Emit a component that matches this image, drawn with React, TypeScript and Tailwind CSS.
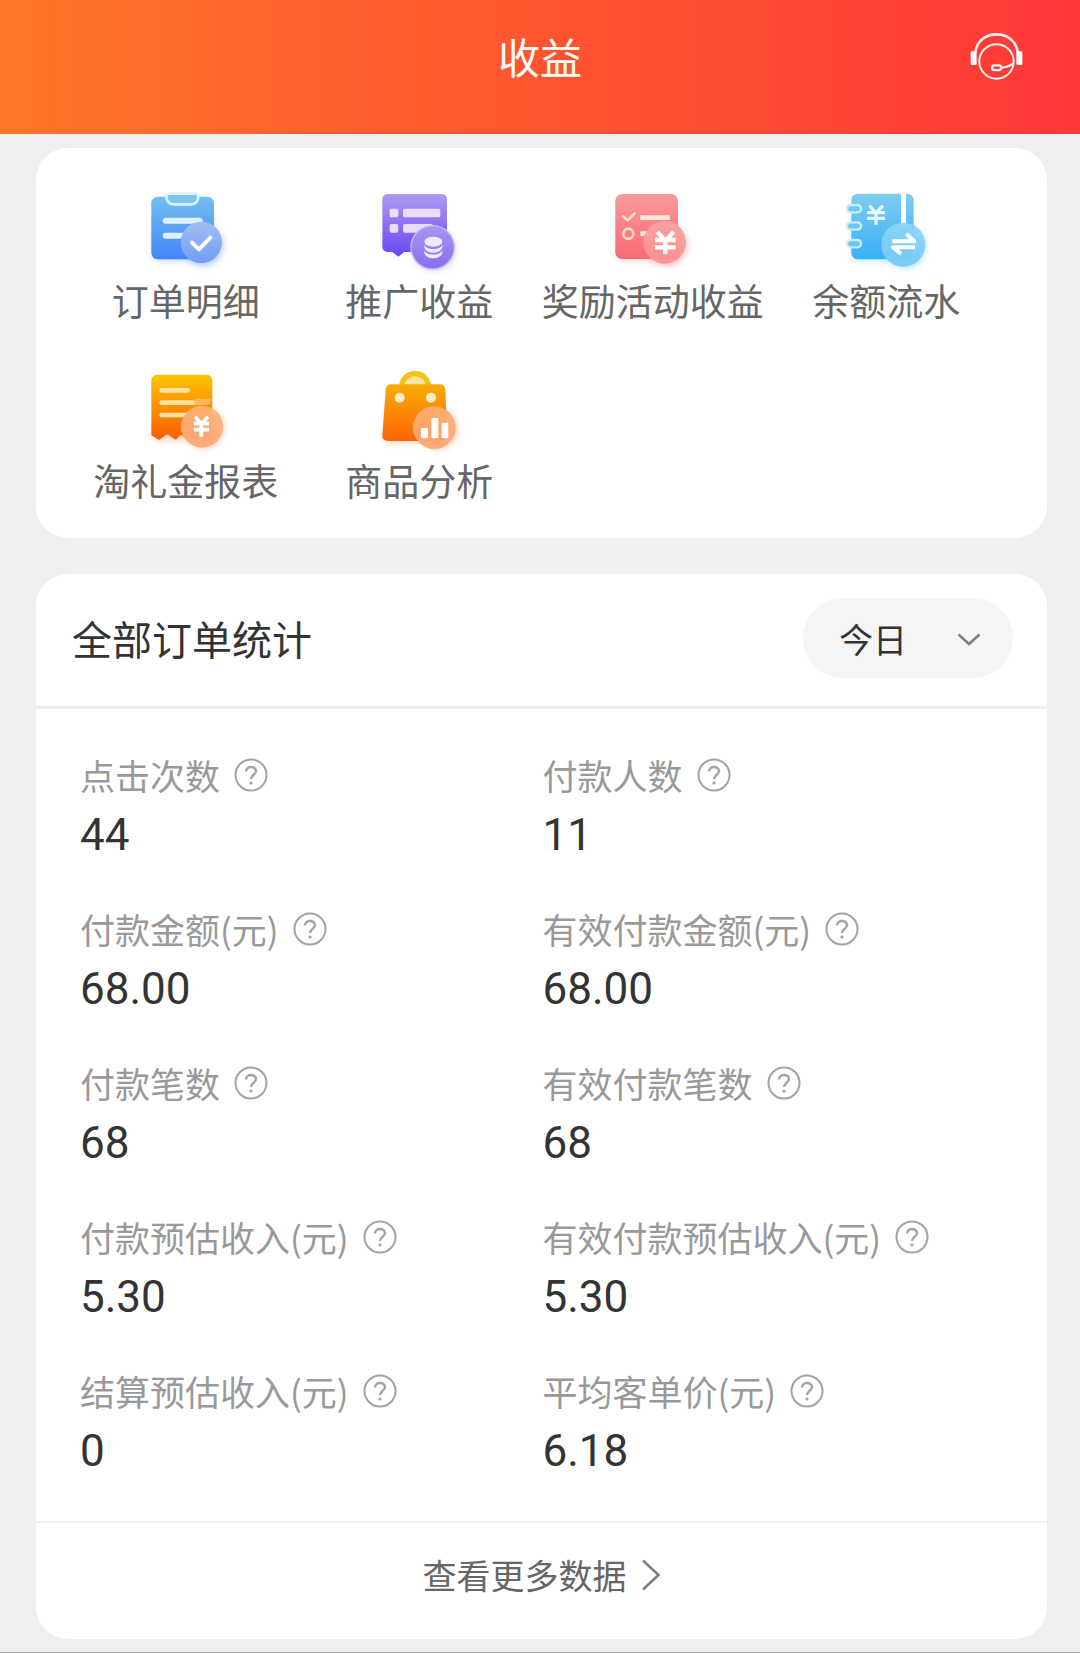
import { useState } from "react"
import type { ReactNode } from "react"

type MenuItem = {
  label: string
  icon: ReactNode
}

type Stat = {
  label: string
  value: string
}

// soft glow under each round badge
const Glow = ({ id }: { id: string }) => (
  <filter id={id} x="-40%" y="-40%" width="180%" height="180%">
    <feGaussianBlur stdDeviation="9" />
  </filter>
)

const Fill = ({ id, from, to }: { id: string; from: string; to: string }) => (
  <linearGradient id={id} x1="0" y1="0" x2="0" y2="1">
    <stop offset="0" stopColor={from} />
    <stop offset="1" stopColor={to} />
  </linearGradient>
)

const iconClass = "h-[100px] w-[110px]"

const OrderIcon = () => (
  <svg viewBox="0 0 330 300" className={iconClass} aria-hidden="true">
    <defs>
      <Fill id="order-a" from="#72bff0" to="#4284fb" />
      <Fill id="order-b" from="#a3bdf4" to="#6f9df5" />
      <Glow id="order-g" />
    </defs>
    <rect x="66" y="100" width="180" height="144" rx="20" fill="#4284fb" opacity="0.3" filter="url(#order-g)" />
    <circle cx="216" cy="196" r="62" fill="#8fb4ff" opacity="0.6" filter="url(#order-g)" />
    <rect x="61" y="50" width="188" height="188" rx="20" fill="url(#order-a)" />
    <path d="M106 48 C106 64 114 73 128 73 H180 C194 73 202 64 202 48 C202 43 198 41 192 41 H116 C110 41 106 43 106 48 Z" fill="#7cc4ee" stroke="#dcf3ff" strokeWidth="8" />
    <path d="M104 122 H206 M104 167 H160" stroke="#e2f1ff" strokeWidth="18" strokeLinecap="round" />
    <circle cx="211" cy="187" r="62" fill="url(#order-b)" />
    <path d="M183 188 L204 208 L238 173" fill="none" stroke="#fff" strokeWidth="12" strokeLinecap="round" strokeLinejoin="round" />
  </svg>
)

const PromoIcon = () => (
  <svg viewBox="0 0 330 300" className={iconClass} aria-hidden="true">
    <defs>
      <Fill id="promo-a" from="#b09af0" to="#6a45f5" />
      <Fill id="promo-b" from="#a898ee" to="#8a6cf0" />
      <Glow id="promo-g" />
    </defs>
    <circle cx="210" cy="208" r="64" fill="#9278e8" opacity="0.35" filter="url(#promo-g)" />
    <path d="M72 42 H232 Q249 42 249 59 V216 H121 L103 230 L85 216 H72 Q55 216 55 199 V59 Q55 42 72 42 Z" fill="url(#promo-a)" />
    <g fill="#eadcfb">
      <rect x="77" y="86" width="26" height="26" rx="5" />
      <rect x="117" y="86" width="112" height="26" rx="5" />
      <rect x="77" y="132" width="26" height="26" rx="5" />
      <rect x="117" y="132" width="90" height="26" rx="5" />
    </g>
    <circle cx="206" cy="202" r="65" fill="url(#promo-b)" stroke="#c8bdfa" strokeWidth="4" />
    <g fill="#efe8ff">
      <ellipse cx="208" cy="185" rx="27" ry="15" />
      <path d="M181 194 C186 211 230 211 235 194 V202 C230 224 186 224 181 202 Z" />
      <path d="M181 211 C186 228 230 228 235 211 V219 C230 240 186 240 181 219 Z" />
    </g>
  </svg>
)

const RewardIcon = () => (
  <svg viewBox="0 0 330 300" className={iconClass} aria-hidden="true">
    <defs>
      <Fill id="reward-a" from="#f99a9a" to="#fa6a75" />
      <Fill id="reward-b" from="#faa3a3" to="#fb9094" />
      <Glow id="reward-g" />
    </defs>
    <rect x="56" y="100" width="176" height="142" rx="20" fill="#fa6a75" opacity="0.3" filter="url(#reward-g)" />
    <circle cx="206" cy="196" r="64" fill="#fb9fa3" opacity="0.5" filter="url(#reward-g)" />
    <rect x="52" y="42" width="188" height="195" rx="20" fill="url(#reward-a)" />
    <path d="M75 109 L89 121 L110 100" fill="none" stroke="#ffe1d2" strokeWidth="7" strokeLinecap="round" strokeLinejoin="round" />
    <path d="M127 113 H216 M127 161 H160" stroke="#ffe9de" strokeWidth="14" />
    <circle cx="91" cy="161" r="15" fill="none" stroke="#ffd8c8" strokeWidth="8" />
    <circle cx="200" cy="187" r="64" fill="url(#reward-b)" opacity="0.94" />
    <path d="M178 156 L202 182 L227 156 M171 180 H233 M171 202 H233 M202 182 V222" fill="none" stroke="#fff" strokeWidth="13" />
  </svg>
)

const BalanceIcon = () => (
  <svg viewBox="0 0 330 300" className={iconClass} aria-hidden="true">
    <defs>
      <Fill id="balance-a" from="#80cdef" to="#37b0f8" />
      <Fill id="balance-b" from="#8ed4f5" to="#74caf8" />
      <Glow id="balance-g" />
    </defs>
    <rect x="64" y="100" width="176" height="144" rx="20" fill="#37b0f8" opacity="0.3" filter="url(#balance-g)" />
    <circle cx="222" cy="200" r="64" fill="#7dcdf8" opacity="0.5" filter="url(#balance-g)" />
    <rect x="61" y="41" width="187" height="197" rx="20" fill="url(#balance-a)" />
    <rect x="210" y="38" width="15" height="100" fill="#fff" />
    <g fill="#6cc6f3" stroke="#c8ecfb" strokeWidth="7">
      <rect x="48" y="75" width="42" height="22" rx="11" />
      <rect x="48" y="127" width="42" height="22" rx="11" />
      <rect x="48" y="180" width="42" height="22" rx="11" />
    </g>
    <path d="M115 77 L135 99 L156 77 M108 98 H162 M108 115 H162 M135 99 V134" fill="none" stroke="#e8f8ff" strokeWidth="10" />
    <circle cx="217" cy="194" r="66" fill="url(#balance-b)" opacity="0.94" />
    <path d="M184 184 H250 L226 162 M252 202 H186 L210 222" fill="none" stroke="#fff" strokeWidth="12" strokeLinejoin="round" />
  </svg>
)

const GiftReportIcon = () => (
  <svg viewBox="0 0 330 300" className={iconClass} aria-hidden="true">
    <defs>
      <Fill id="gift-a" from="#fbc500" to="#fd5b05" />
      <Fill id="gift-b" from="#fcb273" to="#fcaa7c" />
      <Glow id="gift-g" />
    </defs>
    <rect x="64" y="180" width="120" height="62" rx="20" fill="#fd7a30" opacity="0.3" filter="url(#gift-g)" />
    <circle cx="220" cy="206" r="60" fill="#fcb48c" opacity="0.6" filter="url(#gift-g)" />
    <path d="M80 44 H226 Q244 44 244 64 V236 H166 L150 224 L134 239 L108 223 L84 240 L61 226 V64 Q61 44 80 44 Z" fill="url(#gift-a)" />
    <path d="M92 91 H170 M92 128 H190 M92 165 H166" stroke="#ffe2a0" strokeWidth="14" strokeLinecap="round" />
    <path d="M190 120 Q194 116 200 116 H240 Q240 135 226 135 H190 Z" fill="#fcb85a" />
    <circle cx="213" cy="200" r="63" fill="url(#gift-b)" opacity="0.94" />
    <path d="M192 170 L211 192 L231 170 M189 191 H234 M189 209 H234 M211 192 V231" fill="none" stroke="#fff" strokeWidth="11" />
  </svg>
)

const GoodsIcon = () => (
  <svg viewBox="0 0 330 300" className={iconClass} aria-hidden="true">
    <defs>
      <Fill id="goods-a" from="#f9ad05" to="#fd6408" />
      <Fill id="goods-b" from="#fcae70" to="#fca677" />
      <Glow id="goods-g" />
    </defs>
    <rect x="60" y="190" width="120" height="60" rx="20" fill="#fd7a30" opacity="0.3" filter="url(#goods-g)" />
    <circle cx="220" cy="206" r="62" fill="#fcb48c" opacity="0.6" filter="url(#goods-g)" />
    <path d="M112 82 C114 55 132 41 153 41 C174 41 192 55 194 82" fill="#ffe3a3" stroke="#f6c312" strokeWidth="16" />
    <path d="M82 73 H228 Q243 73 244 90 L250 226 Q250 243 234 243 H72 Q54 243 55 226 L65 90 Q66 73 82 73 Z" fill="url(#goods-a)" />
    <circle cx="107" cy="113" r="15" fill="#ffedc8" />
    <circle cx="201" cy="113" r="15" fill="#ffedc8" />
    <circle cx="211" cy="203" r="64" fill="url(#goods-b)" opacity="0.94" />
    <g fill="#fff">
      <rect x="171" y="204" width="21" height="31" rx="4" />
      <rect x="202" y="174" width="21" height="61" rx="4" />
      <rect x="233" y="188" width="20" height="47" rx="4" />
    </g>
  </svg>
)

const HeadsetIcon = () => (
  <svg viewBox="88 68 160 148" className="h-[49px] w-[53px]" fill="none" stroke="#fff0ec" strokeWidth="8" aria-hidden="true">
    <path d="M104 130 C108 96 134 75 168 75 C202 75 228 96 232 130" />
    <circle cx="168" cy="157" r="52" strokeWidth="6" />
    <rect x="90" y="126" width="18" height="42" rx="4" fill="#fff" stroke="none" />
    <rect x="228" y="126" width="18" height="42" rx="4" fill="#fff" stroke="none" />
    <rect x="155" y="169" width="27" height="14" rx="6" strokeWidth="7" />
    <path d="M181 176 C196 175 208 171 220 162" strokeWidth="7" />
  </svg>
)

const HelpIcon = () => (
  <svg viewBox="0 0 34 34" className="size-[34px]" fill="none" stroke="#a3a3a3" strokeWidth="2" aria-hidden="true">
    <circle cx="17" cy="17" r="15.5" />
    <path d="M12 13.5 C12 7.5 22 7.5 22 13.3 C22 16.6 17 17 17 21" strokeWidth="2.4" />
    <circle cx="17" cy="25" r="1.6" fill="#a3a3a3" stroke="none" />
  </svg>
)

const menu: MenuItem[] = [
  { label: "订单明细", icon: <OrderIcon /> },
  { label: "推广收益", icon: <PromoIcon /> },
  { label: "奖励活动收益", icon: <RewardIcon /> },
  { label: "余额流水", icon: <BalanceIcon /> },
  { label: "淘礼金报表", icon: <GiftReportIcon /> },
  { label: "商品分析", icon: <GoodsIcon /> },
]

const stats: Stat[] = [
  { label: "点击次数", value: "44" },
  { label: "付款人数", value: "11" },
  { label: "付款金额(元)", value: "68.00" },
  { label: "有效付款金额(元)", value: "68.00" },
  { label: "付款笔数", value: "68" },
  { label: "有效付款笔数", value: "68" },
  { label: "付款预估收入(元)", value: "5.30" },
  { label: "有效付款预估收入(元)", value: "5.30" },
  { label: "结算预估收入(元)", value: "0" },
  { label: "平均客单价(元)", value: "6.18" },
]

const Header = () => (
  <header className="grid grid-cols-[1fr_auto_1fr] items-center bg-linear-to-r from-[#ff7728] via-[#ff5a2e] via-40% to-[#ff3638] pt-[26px] pb-12">
    <h1 className="col-start-2 text-[42px] leading-[60px] text-white">收益</h1>
    <button type="button" aria-label="客服" className="mr-[57px] justify-self-end">
      <HeadsetIcon />
    </button>
  </header>
)

const MenuCard = () => (
  <nav className="grid grid-cols-4 gap-y-10 rounded-[32px] bg-white pt-8 pr-11 pb-[38px] pl-[33px]">
    {menu.map((item) => (
      <a key={item.label} href="#" className="flex flex-col items-center whitespace-nowrap text-[37px] leading-10 text-[#666]">
        {item.icon}
        {item.label}
      </a>
    ))}
  </nav>
)

const StatsCard = () => {
  const [range, setRange] = useState("今日")

  return (
    <section className="rounded-[32px] bg-white">
      <div className="flex items-center justify-between border-b-3 border-[#eeeef0] pt-6 pr-[34px] pb-7 pl-9">
        <h2 className="text-[40px] leading-[60px] text-[#333]">全部订单统计</h2>
        <div className="relative">
          <select
            aria-label="时间范围"
            value={range}
            onChange={(e) => setRange(e.target.value)}
            className="h-20 w-[210px] appearance-none rounded-full bg-[#f5f5f5] pl-9 text-[34px] text-[#333]"
          >
            <option>今日</option>
            <option>昨日</option>
            <option>近7日</option>
          </select>
          <svg viewBox="0 0 24 14" className="pointer-events-none absolute top-[35px] right-8 h-3.5 w-6" fill="none" stroke="#808080" strokeWidth="2.6" aria-hidden="true">
            <path d="M1.5 1.5 L12 11 L22.5 1.5" />
          </svg>
        </div>
      </div>

      <dl className="grid grid-cols-[463fr_505fr] gap-y-[42px] py-[42px] pl-11">
        {stats.map((stat) => (
          <div key={stat.label} className="flex flex-col gap-2">
            <dt className="flex items-center gap-3.5 whitespace-nowrap text-[35px] leading-[48px] text-[#999]">
              {stat.label}
              <button type="button" aria-label={`${stat.label}说明`}>
                <HelpIcon />
              </button>
            </dt>
            <dd className="font-[Roboto,'Noto_Sans_CJK_SC',sans-serif] text-[44px] leading-[56px] text-[#333]">{stat.value}</dd>
          </div>
        ))}
      </dl>

      <a href="#" className="flex items-center justify-center gap-3.5 border-t-2 border-[#f2f2f3] pt-7 pb-10 text-[34px] leading-[48px] text-[#666]">
        查看更多数据
        <svg viewBox="0 0 20 32" className="h-8 w-5" fill="none" stroke="#808080" strokeWidth="2.6" aria-hidden="true">
          <path d="M2 1.5 L17.5 16 L2 30.5" />
        </svg>
      </a>
    </section>
  )
}

export default function App() {
  return (
    <div className="min-h-screen border-b border-[#aaa] bg-[#edeff1] font-['Noto_Sans_CJK_SC',sans-serif]">
      <Header />
      <main className="flex flex-col gap-9 pt-3.5 pr-[33px] pb-3 pl-9">
        <MenuCard />
        <StatsCard />
      </main>
    </div>
  )
}
